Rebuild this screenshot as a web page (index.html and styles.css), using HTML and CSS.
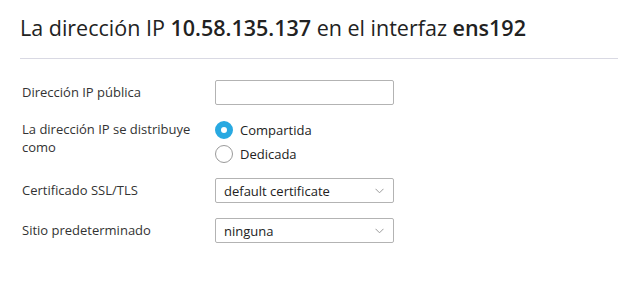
FILE: index.html
```html
<!DOCTYPE html>
<html lang="es">
<head>
  <meta charset="UTF-8" />
  <title>Dirección IP</title>
  <link rel="stylesheet" href="styles.css">
</head>
<body>
  <div class="page">
    <h1 class="page-title">La dirección IP <b>10.58.135.137</b> en el interfaz <b>ens192</b></h1>

    <form class="ip-form">
      <div class="form-row row-ip">
        <label class="form-label" for="publicIp">Dirección IP pública</label>
        <div class="form-field">
          <input id="publicIp" class="text-input" type="text" />
        </div>
      </div>

      <div class="form-row row-radio">
        <div class="form-label label-radio">La dirección IP se distribuye como</div>
        <div class="form-field radio-list">
          <label class="radio-item">
            <span class="radio-dot checked"></span>
            <span>Compartida</span>
          </label>
          <label class="radio-item">
            <span class="radio-dot"></span>
            <span>Dedicada</span>
          </label>
        </div>
      </div>

      <div class="form-row row-ssl">
        <label class="form-label">Certificado SSL/TLS</label>
        <div class="form-field">
          <div class="select-box">
            <span>default certificate</span>
            <svg class="chevron" width="9" height="6" viewBox="0 0 9 6"><path d="M0.5 0.8 L4.5 4.8 L8.5 0.8" fill="none" stroke="#9a9a9a" stroke-width="1"/></svg>
          </div>
        </div>
      </div>

      <div class="form-row row-site">
        <label class="form-label">Sitio predeterminado</label>
        <div class="form-field">
          <div class="select-box">
            <span>ninguna</span>
            <svg class="chevron" width="9" height="6" viewBox="0 0 9 6"><path d="M0.5 0.8 L4.5 4.8 L8.5 0.8" fill="none" stroke="#9a9a9a" stroke-width="1"/></svg>
          </div>
        </div>
      </div>
    </form>
  </div>
</body>
</html>
```

FILE: styles.css
```css
body {
  margin: 0;
  background: #fff;
  font-family: "Open Sans", "Liberation Sans", sans-serif;
  color: #333;
}

.page {
  padding-left: 20px;
}

.page-title {
  margin: 0;
  padding: 14px 0 16px 0;
  font-size: 21.5px;
  font-weight: 400;
  line-height: 28px;
  color: #222;
  border-bottom: 1px solid #d9d9e3;
}

.page-title b {
  font-weight: 600;
}

.ip-form {
  padding-top: 21px;
  font-size: 13px;
  line-height: 18px;
}

.form-row {
  display: grid;
  grid-template-columns: 193px 179px;
  padding-left: 2px;
}

.form-label {
  padding-top: 3px;
  padding-right: 10px;
}

.row-radio {
  margin-top: 13px;
}

.label-radio {
  padding-top: 2px;
}

.row-ssl {
  margin-top: 12px;
}

.row-site {
  margin-top: 15px;
}

.text-input {
  box-sizing: border-box;
  display: block;
  width: 179px;
  height: 25px;
  margin: 0;
  border: 1px solid #b3b3b3;
  border-radius: 2px;
  background: #fff;
}

.radio-list {
  display: flex;
  flex-direction: column;
}

.radio-item {
  display: flex;
  align-items: center;
  gap: 7px;
  height: 24px;
  color: #222;
}

.radio-dot {
  box-sizing: border-box;
  width: 18px;
  height: 18px;
  border-radius: 50%;
  border: 1px solid #9a9a9a;
  background: #fff;
}

.radio-dot.checked {
  border: 6px solid #28a9e1;
}

.select-box {
  box-sizing: border-box;
  display: flex;
  align-items: center;
  justify-content: space-between;
  width: 179px;
  height: 25px;
  padding: 0 9px 0 8px;
  border: 1px solid #b3b3b3;
  border-radius: 2px;
  color: #222;
}

.chevron {
  display: block;
}
```
